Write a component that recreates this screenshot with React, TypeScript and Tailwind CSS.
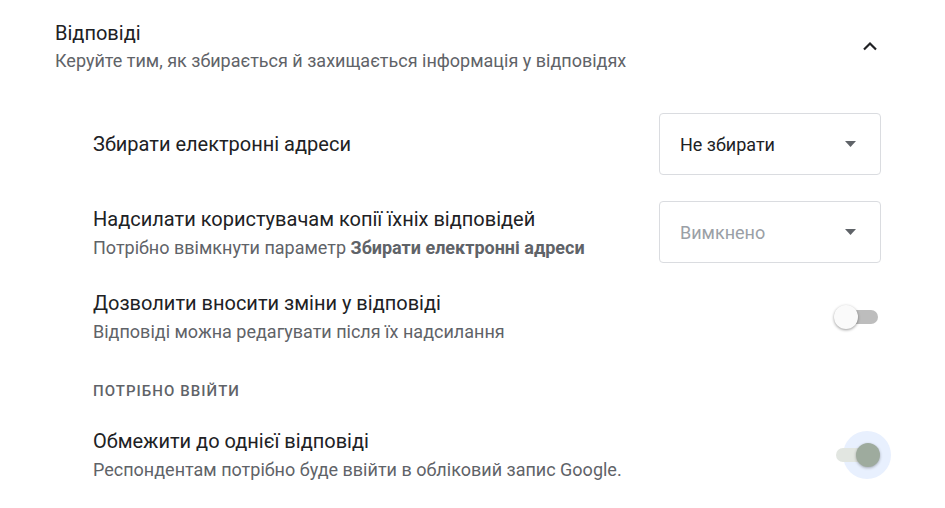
import { ReactNode } from "react";

const font = { fontFamily: "Roboto, 'Noto Sans', Arial, sans-serif" };

function Dropdown({ value, disabled }: { value: string; disabled?: boolean }) {
  return (
    <div className="w-[222px] h-[62px] shrink-0 rounded-[4px] border border-[#dadce0] flex items-center justify-between pl-[20px] pr-[24px]">
      <span className={`text-[18px] ${disabled ? "text-[#9aa0a6]" : "text-[#202124]"}`}>{value}</span>
      <svg width="11" height="6" viewBox="0 0 11 6">
        <path d="M0 0 L11 0 L5.5 6 Z" fill="#5f6368" />
      </svg>
    </div>
  );
}

function Toggle({ on }: { on?: boolean }) {
  return (
    <div className="relative w-[44px] h-[16px] mr-[2px]">
      {on && <div className="absolute w-[48px] h-[48px] rounded-full bg-[#e8f0fe] left-[8px] top-[-16px]" />}
      <div className={`absolute inset-x-[1px] top-[1px] h-[14px] rounded-full ${on ? "bg-[#e2e6e1]" : "bg-[#bdbdbd]"}`} />
      <div
        className={`absolute w-[24px] h-[24px] rounded-full top-[-4px] ${
          on ? "left-[21px] bg-[#9eab9e] shadow-[0_1px_3px_rgba(0,0,0,0.3)]" : "left-[-1px] bg-[#fafafa] shadow-[0_1px_3px_rgba(0,0,0,0.4)]"
        }`}
      />
    </div>
  );
}

function Row({ title, sub, right }: { title: string; sub?: ReactNode; right: ReactNode }) {
  return (
    <div className="flex items-center justify-between">
      <div>
        <div className="text-[20px] leading-[28px] text-[#202124]">{title}</div>
        {sub && <div className="mt-[3px] text-[18px] leading-[24px] text-[#5f6368]">{sub}</div>}
      </div>
      {right}
    </div>
  );
}

export default function App() {
  return (
    <div className="w-[945px] h-[508px] bg-white overflow-hidden" style={font}>
      {/* Header */}
      <div className="flex items-start justify-between pl-[55px] pr-[64px] pt-[19px]">
        <div>
          <div className="text-[20px] leading-[28px] text-[#202124]">Відповіді</div>
          <div className="mt-[2px] text-[18px] leading-[24px] text-[#5f6368]">
            Керуйте тим, як збирається й захищається інформація у відповідях
          </div>
        </div>
        <svg width="16" height="10" viewBox="0 0 16 10" className="mt-[22px] mr-[3px]">
          <path d="M2 8.5 L8 2.5 L14 8.5" fill="none" stroke="#202124" strokeWidth="2.2" />
        </svg>
      </div>

      {/* Settings */}
      <div className="pl-[93px] pr-[64px] mt-[40px] flex flex-col gap-[26px]">
        <Row title="Збирати електронні адреси" right={<Dropdown value="Не збирати" />} />
        <Row
          title="Надсилати користувачам копії їхніх відповідей"
          sub={
            <>
              Потрібно ввімкнути параметр <span className="font-bold">Збирати електронні адреси</span>
            </>
          }
          right={<Dropdown value="Вимкнено" disabled />}
        />
        <Row
          title="Дозволити вносити зміни у відповіді"
          sub="Відповіді можна редагувати після їх надсилання"
          right={<Toggle />}
        />
        <div className="mt-[11px] text-[15px] leading-[20px] font-medium tracking-[0.07em] text-[#5f6368]">ПОТРІБНО ВВІЙТИ</div>
        <Row
          title="Обмежити до однієї відповіді"
          sub="Респондентам потрібно буде ввійти в обліковий запис Google."
          right={<Toggle on />}
        />
      </div>
    </div>
  );
}
